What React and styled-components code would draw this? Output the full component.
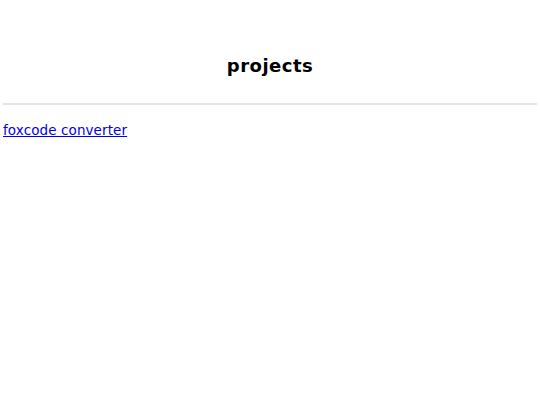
import React from "react";
import styled, { createGlobalStyle } from "styled-components";

const GlobalStyle = createGlobalStyle`
  body {
    margin: 0;
    background: #fff;
    font-family: "DejaVu Sans", sans-serif;
  }
`;

const Page = styled.div`
  padding: 0 3px;
`;

const Title = styled.h1`
  margin: 0;
  padding-top: 55px;
  height: 48px;
  text-align: center;
  font-size: 18px;
  font-weight: bold;
  color: #000;
  letter-spacing: 0.5px;
`;

const Rule = styled.hr`
  margin: 0;
  border: none;
  height: 2px;
  background: #e4e4e4;
`;

const List = styled.div`
  padding-top: 15px;
`;

const ProjectLink = styled.a`
  font-size: 13.5px;
  letter-spacing: 0.1px;
  color: #0000ee;
  text-decoration: underline;
`;

export default function App() {
  return (
    <>
      <GlobalStyle />
      <Page>
        <Title>projects</Title>
        <Rule />
        <List>
          <ProjectLink href="#">foxcode converter</ProjectLink>
        </List>
      </Page>
    </>
  );
}
